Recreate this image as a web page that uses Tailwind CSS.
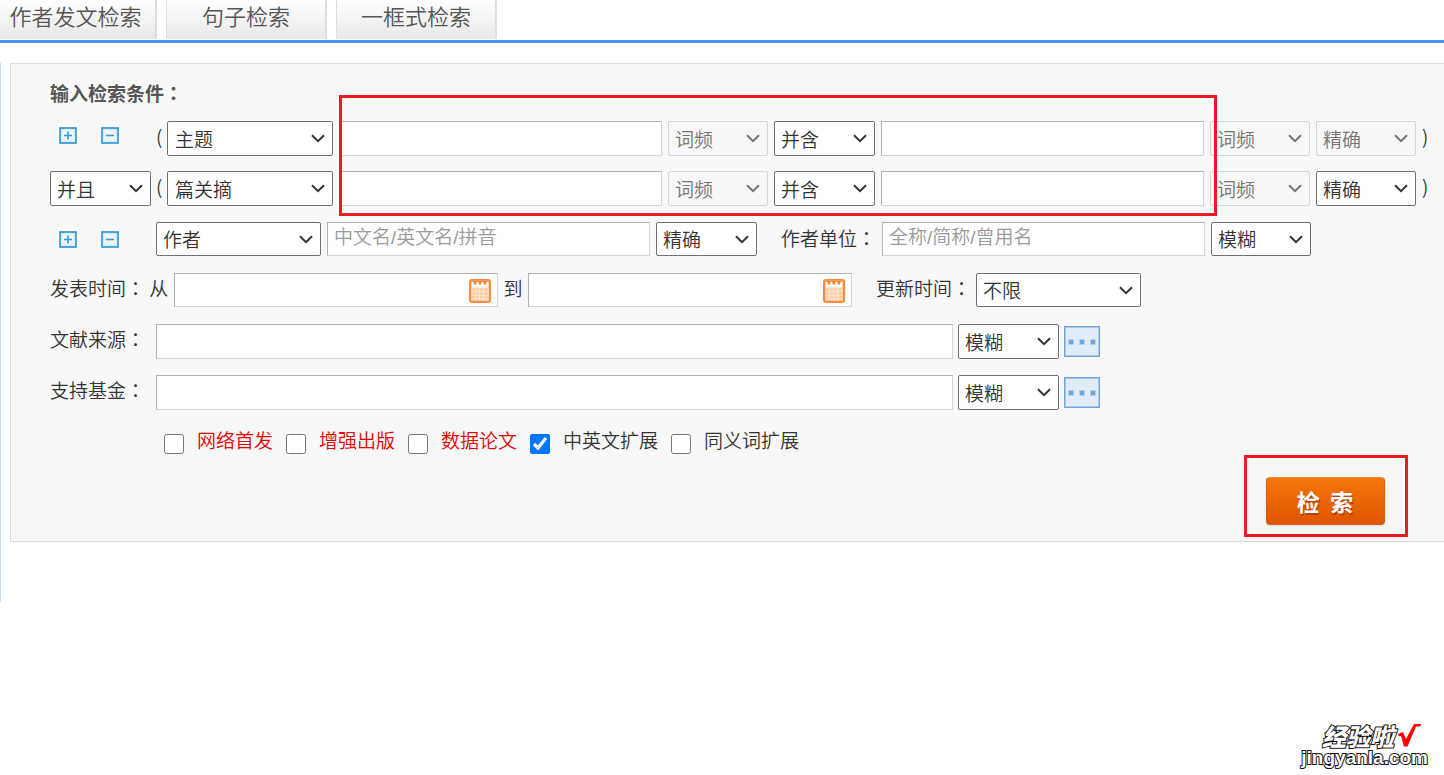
<!DOCTYPE html>
<html lang="zh-CN">
<head>
<meta charset="utf-8">
<title>高级检索</title>
<script src="https://cdn.jsdelivr.net/npm/@tailwindcss/browser@4"></script>
</head>
<body class="flex min-h-screen flex-col overflow-x-hidden bg-white font-['Noto_Sans_CJK_SC',sans-serif] text-[19px] leading-7 font-[350] text-[#333]">

<svg class="hidden" aria-hidden="true">
  <symbol id="chevron" viewBox="0 0 14 9"><path d="M1 1.2 7 7.2 13 1.2" fill="none" stroke="currentColor" stroke-width="2"/></symbol>
  <symbol id="plus" viewBox="0 0 18 17"><rect x="1" y="1" width="16" height="15" fill="#f2fafe" stroke="#2b91cd" stroke-width="1.6"/><rect x="2.5" y="2.5" width="13" height="12" fill="#e8f5fc" stroke="#d4ebf7"/><path d="M5 8.5h8M9 4.5v8" stroke="#3a9ad2" stroke-width="1.6"/></symbol>
  <symbol id="minus" viewBox="0 0 18 17"><rect x="1" y="1" width="16" height="15" fill="#f2fafe" stroke="#2b91cd" stroke-width="1.6"/><rect x="2.5" y="2.5" width="13" height="12" fill="#e8f5fc" stroke="#d4ebf7"/><path d="M5 8.5h8" stroke="#3a9ad2" stroke-width="1.6"/></symbol>
  <symbol id="calendar" viewBox="0 0 22 24">
    <rect x="1" y="1" width="20" height="22" rx="2" fill="#ffcfaa" stroke="#fb8a3c" stroke-width="2"/>
    <path d="M3 3h16v5H3z" fill="#fff"/>
    <path d="M3 8.5h16M3 12.500h16M3 16.500h16M3 20h16M6.500 8v13M10.500 8v13M14.500 8v13" stroke="#ffe3cf"/>
    <path d="M2 1h18v2H2z" fill="#ff9a55"/>
    <path d="M4.500 2h3v2.500l-1.500 1.500-1.500-1.500zM9.500 2h3v2.500l-1.500 1.500-1.500-1.500zM14.500 2h3v2.500l-1.500 1.500-1.500-1.500z" fill="#fb8228"/>
  </symbol>
  <symbol id="dots" viewBox="0 0 36 31">
    <rect x=".5" y=".5" width="35" height="30" fill="#e0ecf8" stroke="#71a3da"/>
    <rect x="1.500" y="1.500" width="33" height="28" fill="none" stroke="#a9c9ec"/>
    <path d="M4 13h6v6H4zM15 13h6v6h-6zM26 13h6v6h-6z" fill="#b5d2f0"/>
    <path d="M5 14h4v4H5zM16 14h4v4h-4zM27 14h4v4h-4z" fill="#6fa5dc"/>
  </symbol>
</svg>

<header>
  <nav class="-ml-1 flex h-10 items-start gap-[9px] text-[22px] text-[#555]">
    <a href="#" class="flex h-[39px] w-[161px] justify-center border-r-2 border-[#dedede] bg-linear-to-b from-white to-[#e8e8e8] pt-px">作者发文检索</a>
    <a href="#" class="flex h-[39px] w-[161px] justify-center border-r-2 border-l border-[#dedede] bg-linear-to-b from-white to-[#e8e8e8] pt-px">句子检索</a>
    <a href="#" class="flex h-[39px] w-[161px] justify-center border-r-2 border-l border-[#dedede] bg-linear-to-b from-white to-[#e8e8e8] pt-px">一框式检索</a>
  </nav>
  <div class="h-[3px] bg-[#4596e8]"></div>
</header>

<main class="mt-5 border-l border-[#c8daf2] pb-15">
  <form class="relative ml-[9px] border-y border-l border-[#ddd] bg-[#f8f8f8] pt-[15px] pb-1 pl-[39px]">
    <h1 class="mb-[14px] font-bold text-[#555]">输入检索条件<span lang="zh-TW" class="font-['Noto_Sans_CJK_TC',sans-serif]">：</span></h1>

    <div class="flex flex-col gap-4">
      <div class="-mb-px flex h-[35px] items-center">
        <div class="flex w-[106px] gap-6 pb-1.5 pl-[9px]">
          <button type="button" aria-label="增加一行"><svg class="h-[17px] w-[18px]"><use href="#plus"/></svg></button>
          <button type="button" aria-label="减少一行"><svg class="h-[17px] w-[18px]"><use href="#minus"/></svg></button>
        </div>
        <span class="w-[11px] pb-1.5">(</span>
        <div class="flex min-w-0 flex-1 gap-1.5">
          <div class="relative w-[166px]"><select aria-label="检索字段" class="h-[35px] w-full appearance-none rounded-xs border border-[#707070] bg-white pl-[7px]"><option>主题</option></select><svg class="pointer-events-none absolute top-[13px] right-2 h-[9px] w-[14px]"><use href="#chevron"/></svg></div>
          <input type="text" aria-label="检索词一" class="h-[35px] min-w-0 flex-1 border border-t-[#b2b2b2] border-r-[#d5d5d5] border-b-[#d5d5d5] border-l-[#b2b2b2] bg-white px-[7px]">
          <div class="relative w-[100px] text-[#757575]"><select disabled aria-label="词频一" class="h-[35px] w-full appearance-none rounded-xs border border-[#d6d6d6] bg-[#f7f7f7] pl-1.5"><option>词频</option></select><svg class="pointer-events-none absolute top-[13px] right-2 h-[9px] w-[14px]"><use href="#chevron"/></svg></div>
          <div class="relative w-[101px]"><select aria-label="逻辑关系" class="h-[35px] w-full appearance-none rounded-xs border border-[#707070] bg-white pl-1.5"><option>并含</option></select><svg class="pointer-events-none absolute top-[13px] right-2 h-[9px] w-[14px]"><use href="#chevron"/></svg></div>
          <input type="text" aria-label="检索词二" class="h-[35px] min-w-0 flex-1 border border-t-[#b2b2b2] border-r-[#d5d5d5] border-b-[#d5d5d5] border-l-[#b2b2b2] bg-white px-[7px]">
          <div class="relative w-[100px] text-[#757575]"><select disabled aria-label="词频二" class="h-[35px] w-full appearance-none rounded-xs border border-[#d6d6d6] bg-[#f7f7f7] pl-1.5"><option>词频</option></select><svg class="pointer-events-none absolute top-[13px] right-2 h-[9px] w-[14px]"><use href="#chevron"/></svg></div>
          <div class="relative w-[100px] text-[#757575]"><select disabled aria-label="匹配方式" class="h-[35px] w-full appearance-none rounded-xs border border-[#d6d6d6] bg-[#f7f7f7] pl-1.5"><option>精确</option></select><svg class="pointer-events-none absolute top-[13px] right-2 h-[9px] w-[14px]"><use href="#chevron"/></svg></div>
        </div>
        <span class="w-7 pb-1.5 pl-1.5">)</span>
      </div>

      <div class="flex h-[35px] items-center">
        <div class="w-[106px]">
          <div class="relative w-[101px]"><select aria-label="行间关系" class="h-[35px] w-full appearance-none rounded-xs border border-[#707070] bg-white pl-1.5"><option>并且</option></select><svg class="pointer-events-none absolute top-[13px] right-2 h-[9px] w-[14px]"><use href="#chevron"/></svg></div>
        </div>
        <span class="w-[11px] pb-1.5">(</span>
        <div class="flex min-w-0 flex-1 gap-1.5">
          <div class="relative w-[166px]"><select aria-label="第二行检索字段" class="h-[35px] w-full appearance-none rounded-xs border border-[#707070] bg-white pl-[7px]"><option>篇关摘</option></select><svg class="pointer-events-none absolute top-[13px] right-2 h-[9px] w-[14px]"><use href="#chevron"/></svg></div>
          <input type="text" aria-label="第二行检索词一" class="h-[35px] min-w-0 flex-1 border border-t-[#b2b2b2] border-r-[#d5d5d5] border-b-[#d5d5d5] border-l-[#b2b2b2] bg-white px-[7px]">
          <div class="relative w-[100px] text-[#757575]"><select disabled aria-label="第二行词频一" class="h-[35px] w-full appearance-none rounded-xs border border-[#d6d6d6] bg-[#f7f7f7] pl-1.5"><option>词频</option></select><svg class="pointer-events-none absolute top-[13px] right-2 h-[9px] w-[14px]"><use href="#chevron"/></svg></div>
          <div class="relative w-[101px]"><select aria-label="第二行逻辑关系" class="h-[35px] w-full appearance-none rounded-xs border border-[#707070] bg-white pl-1.5"><option>并含</option></select><svg class="pointer-events-none absolute top-[13px] right-2 h-[9px] w-[14px]"><use href="#chevron"/></svg></div>
          <input type="text" aria-label="第二行检索词二" class="h-[35px] min-w-0 flex-1 border border-t-[#b2b2b2] border-r-[#d5d5d5] border-b-[#d5d5d5] border-l-[#b2b2b2] bg-white px-[7px]">
          <div class="relative w-[100px] text-[#757575]"><select disabled aria-label="第二行词频二" class="h-[35px] w-full appearance-none rounded-xs border border-[#d6d6d6] bg-[#f7f7f7] pl-1.5"><option>词频</option></select><svg class="pointer-events-none absolute top-[13px] right-2 h-[9px] w-[14px]"><use href="#chevron"/></svg></div>
          <div class="relative w-[100px]"><select aria-label="第二行匹配方式" class="h-[35px] w-full appearance-none rounded-xs border border-[#707070] bg-white pl-1.5"><option>精确</option></select><svg class="pointer-events-none absolute top-[13px] right-2 h-[9px] w-[14px]"><use href="#chevron"/></svg></div>
        </div>
        <span class="w-7 pb-1.5 pl-1.5">)</span>
      </div>

      <div class="mb-px flex h-[34px] items-center pr-[133px]">
        <div class="flex w-[106px] gap-6 pl-[9px]">
          <button type="button" aria-label="增加作者"><svg class="h-[17px] w-[18px]"><use href="#plus"/></svg></button>
          <button type="button" aria-label="减少作者"><svg class="h-[17px] w-[18px]"><use href="#minus"/></svg></button>
        </div>
        <div class="flex min-w-0 flex-1 items-center gap-1.5">
          <div class="relative w-[165px]"><select aria-label="作者类型" class="block h-[34px] w-full appearance-none rounded-xs border border-[#707070] bg-white pl-1.5"><option>作者</option></select><svg class="pointer-events-none absolute top-[13px] right-2 h-[9px] w-[14px]"><use href="#chevron"/></svg></div>
          <input type="text" aria-label="作者姓名" placeholder="中文名/英文名/拼音" class="h-[34px] min-w-0 flex-1 border border-t-[#b2b2b2] border-r-[#d5d5d5] border-b-[#d5d5d5] border-l-[#b2b2b2] bg-white px-1.5 pb-[2px] font-['Liberation_Sans','Noto_Sans_CJK_SC',sans-serif] placeholder:text-[#999]">
          <div class="relative w-[101px]"><select aria-label="作者匹配" class="block h-[34px] w-full appearance-none rounded-xs border border-[#707070] bg-white pl-1.5"><option>精确</option></select><svg class="pointer-events-none absolute top-[13px] right-2 h-[9px] w-[14px]"><use href="#chevron"/></svg></div>
          <label for="unit" class="w-[113px] pb-[2px] pl-[18px] whitespace-nowrap">作者单位<span lang="zh-TW" class="font-['Noto_Sans_CJK_TC',sans-serif]">：</span></label>
          <input id="unit" type="text" placeholder="全称/简称/曾用名" class="h-[34px] min-w-0 flex-1 border border-t-[#b2b2b2] border-r-[#d5d5d5] border-b-[#d5d5d5] border-l-[#b2b2b2] bg-white px-1.5 pb-[2px] font-['Liberation_Sans','Noto_Sans_CJK_SC',sans-serif] placeholder:text-[#999]">
          <div class="relative w-[100px]"><select aria-label="单位匹配" class="block h-[34px] w-full appearance-none rounded-xs border border-[#707070] bg-white pl-1.5"><option>模糊</option></select><svg class="pointer-events-none absolute top-[13px] right-2 h-[9px] w-[14px]"><use href="#chevron"/></svg></div>
        </div>
      </div>

      <div class="mb-px flex h-[34px] items-center pr-[303px]">
        <label for="from" class="w-[124px] pb-1 whitespace-nowrap">发表时间<span lang="zh-TW" class="font-['Noto_Sans_CJK_TC',sans-serif]">：</span> 从</label>
        <div class="relative min-w-0 flex-1">
          <input id="from" type="text" class="block h-[34px] w-full border border-t-[#b2b2b2] border-r-[#d5d5d5] border-b-[#d5d5d5] border-l-[#b2b2b2] bg-white px-[7px]">
          <button type="button" aria-label="选择起始日期" class="absolute top-[6px] right-[7px]"><svg class="block h-6 w-[22px]"><use href="#calendar"/></svg></button>
        </div>
        <label for="to" class="w-[30px] pb-1 text-center">到</label>
        <div class="relative min-w-0 flex-1">
          <input id="to" type="text" class="block h-[34px] w-full border border-t-[#b2b2b2] border-r-[#d5d5d5] border-b-[#d5d5d5] border-l-[#b2b2b2] bg-white px-[7px]">
          <button type="button" aria-label="选择结束日期" class="absolute top-[6px] right-[7px]"><svg class="block h-6 w-[22px]"><use href="#calendar"/></svg></button>
        </div>
        <label for="updated" class="w-[124px] pb-1 pl-6 whitespace-nowrap">更新时间<span lang="zh-TW" class="font-['Noto_Sans_CJK_TC',sans-serif]">：</span></label>
        <div class="relative w-[165px]"><select id="updated" class="block h-[34px] w-full appearance-none rounded-xs border border-[#707070] bg-white pl-1.5"><option>不限</option></select><svg class="pointer-events-none absolute top-[13px] right-2 h-[9px] w-[14px]"><use href="#chevron"/></svg></div>
      </div>

      <div class="flex h-[35px] items-center pr-[344px]">
        <label for="source" class="w-[106px] pb-1.5 whitespace-nowrap">文献来源<span lang="zh-TW" class="font-['Noto_Sans_CJK_TC',sans-serif]">：</span></label>
        <div class="flex min-w-0 flex-1 items-center gap-[5px]">
          <input id="source" type="text" class="h-[35px] min-w-0 flex-1 border border-t-[#b2b2b2] border-r-[#d5d5d5] border-b-[#d5d5d5] border-l-[#b2b2b2] bg-white px-[7px]">
          <div class="relative w-[101px]"><select aria-label="来源匹配" class="block h-[35px] w-full appearance-none rounded-xs border border-[#707070] bg-white pl-1.5"><option>模糊</option></select><svg class="pointer-events-none absolute top-[13px] right-2 h-[9px] w-[14px]"><use href="#chevron"/></svg></div>
          <button type="button" aria-label="选择文献来源"><svg class="block h-[31px] w-9"><use href="#dots"/></svg></button>
        </div>
      </div>

      <div class="flex h-[35px] items-center pr-[344px]">
        <label for="fund" class="w-[106px] pb-1.5 whitespace-nowrap">支持基金<span lang="zh-TW" class="font-['Noto_Sans_CJK_TC',sans-serif]">：</span></label>
        <div class="flex min-w-0 flex-1 items-center gap-[5px]">
          <input id="fund" type="text" class="h-[35px] min-w-0 flex-1 border border-t-[#b2b2b2] border-r-[#d5d5d5] border-b-[#d5d5d5] border-l-[#b2b2b2] bg-white px-[7px]">
          <div class="relative w-[101px]"><select aria-label="基金匹配" class="block h-[35px] w-full appearance-none rounded-xs border border-[#707070] bg-white pl-1.5"><option>模糊</option></select><svg class="pointer-events-none absolute top-[13px] right-2 h-[9px] w-[14px]"><use href="#chevron"/></svg></div>
          <button type="button" aria-label="选择基金"><svg class="block h-[31px] w-9"><use href="#dots"/></svg></button>
        </div>
      </div>

      <div class="flex h-7 gap-[13px] pl-[114px] whitespace-nowrap">
        <label class="flex gap-[13px] text-[#e60000]"><input type="checkbox" class="mt-2 size-5">网络首发</label>
        <label class="flex gap-[13px] text-[#e60000]"><input type="checkbox" class="mt-2 size-5">增强出版</label>
        <label class="flex gap-[13px] text-[#e60000]"><input type="checkbox" class="mt-2 size-5">数据论文</label>
        <label class="flex gap-[13px]"><input type="checkbox" checked class="mt-2 size-5">中英文扩展</label>
        <label class="flex gap-[13px]"><input type="checkbox" class="mt-2 size-5">同义词扩展</label>
      </div>
    </div>

    <div class="mt-px flex justify-end pr-9">
      <div class="flex h-[82px] w-[164px] items-center justify-center border-3 border-[#ed1c24] pt-2.5 pr-0.5">
        <button type="submit" class="h-12 w-[119px] rounded-[4px] border border-[#d9620f] border-t-[#f08a35] bg-linear-to-b from-[#f5750a] to-[#e05500] text-[23px] font-bold text-white shadow-sm text-shadow-[1px_2px_0_#b8400a]">检&nbsp;&nbsp;索</button>
      </div>
    </div>

    <div class="pointer-events-none absolute top-[31px] right-[227px] left-[328px] h-[121px] border-3 border-[#ed1c24]"></div>
  </form>
</main>

<footer class="mt-auto flex flex-col items-end pr-4 pb-[7px] font-black text-white">
  <div class="flex items-center gap-1 pr-1.5">
    <span class="text-[24px] leading-6 italic [-webkit-text-stroke:2px_#111] [paint-order:stroke_fill]">经验啦</span>
    <svg class="h-6 w-6" viewBox="0 0 24 24" aria-hidden="true"><path d="M0 10 5 8 8 15 16 0h7l-1 2.500h-4L9.500 22.500H6L3 12 1 12.500z" fill="#f00"/></svg>
  </div>
  <span class="font-['Liberation_Sans',sans-serif] text-[19px] leading-5 font-bold [-webkit-text-stroke:2px_#111] [paint-order:stroke_fill]">jingyanla.com</span>
</footer>
</body>
</html>
